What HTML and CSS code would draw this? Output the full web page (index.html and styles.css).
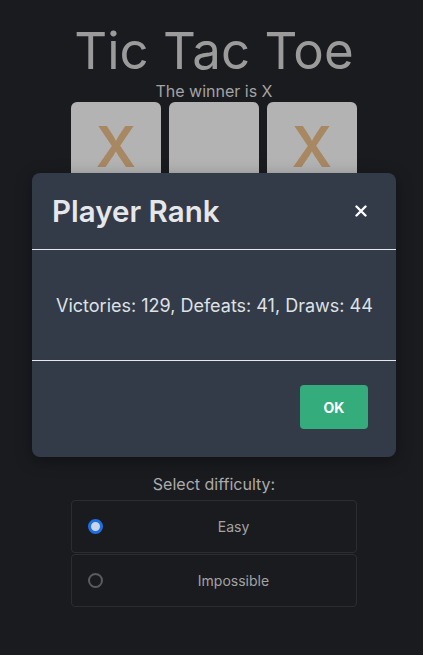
FILE: index.html
```html
<!DOCTYPE html>
<html>
<head>
<meta charset="utf-8">
<link rel="stylesheet" href="styles.css">
</head>
<body>
<main class="app">
  <h1 class="title">Tic Tac Toe</h1>
  <p class="status">The winner is X</p>
  <div class="board">
    <div class="cell">X</div>
    <div class="cell"></div>
    <div class="cell">X</div>
    <div class="cell"></div>
    <div class="cell"></div>
    <div class="cell"></div>
    <div class="cell"></div>
    <div class="cell"></div>
    <div class="cell"></div>
  </div>
  <p class="difficulty-label">Select difficulty:</p>
  <div class="options">
    <label class="option"><span class="radio checked"></span><span class="opt-text">Easy</span></label>
    <label class="option"><span class="radio"></span><span class="opt-text">Impossible</span></label>
  </div>
</main>
<div class="modal">
  <header class="modal-header">
    <h2 class="modal-title">Player Rank</h2>
    <button class="close" aria-label="Close">
      <svg width="12" height="12" viewBox="0 0 12 12"><path d="M1.5 1.5 L10.5 10.5 M10.5 1.5 L1.5 10.5" stroke="#fff" stroke-width="2.4" stroke-linecap="round"/></svg>
    </button>
  </header>
  <div class="modal-body">Victories: 129, Defeats: 41, Draws: 44</div>
  <footer class="modal-footer"><button class="ok">OK</button></footer>
</div>
</body>
</html>
```
FILE: styles.css
```css
* { box-sizing: border-box; }
html, body { margin: 0; padding: 0; }
body {
  background: #1a1b1f;
  font-family: Inter, "Noto Sans", sans-serif;
  width: 423px;
  height: 655px;
  overflow: hidden;
}
.app {
  display: flex;
  flex-direction: column;
  align-items: center;
  padding-top: 21px;
  padding-left: 5px;
}
.title {
  margin: 0;
  font-size: 51px;
  font-weight: 400;
  line-height: 60px;
  color: #9b9b9b;
}
.status {
  margin: 0;
  font-size: 16px;
  line-height: 20px;
  color: #a3a3a3;
}
.board {
  display: grid;
  grid-template-columns: repeat(3, 90px);
  grid-auto-rows: 90px;
  gap: 8px;
  margin-top: 1px;
}
.cell {
  background: #b3b3b3;
  border-radius: 6px;
  display: flex;
  align-items: center;
  justify-content: center;
  font-size: 56px;
  font-weight: 600;
  color: #a88863;
}
.difficulty-label {
  margin: 86px 0 6px;
  font-size: 16px;
  line-height: 20px;
  color: #ababab;
}
.options {
  display: flex;
  flex-direction: column;
  gap: 1px;
  width: 286px;
}
.option {
  display: flex;
  align-items: center;
  height: 53px;
  border: 1px solid #2b2d33;
  border-radius: 4px;
  padding-left: 16px;
}
.radio {
  width: 15px;
  height: 15px;
  border-radius: 50%;
  border: 2px solid #5a5b60;
  flex: none;
}
.radio.checked {
  border: 3px solid #1f6fe0;
  background: #c9d6ea;
}
.opt-text {
  flex: 1;
  text-align: center;
  font-size: 14px;
  color: #a3a3a3;
  padding-left: 8px;
}
.modal {
  position: absolute;
  left: 32px;
  top: 173px;
  width: 364px;
  height: 284px;
  background: #333a48;
  border-radius: 8px;
  display: flex;
  flex-direction: column;
  box-shadow: 0 4px 16px rgba(0,0,0,0.35);
}
.modal-header {
  height: 77px;
  flex: none;
  display: flex;
  align-items: center;
  justify-content: space-between;
  padding: 0 28px 0 20px;
  border-bottom: 1px solid #e8e8e8;
}
.modal-title {
  margin: 0;
  font-size: 29.5px;
  font-weight: 600;
  color: #e6e7ea;
}
.close {
  background: none;
  border: 0;
  padding: 0;
  display: flex;
  margin-right: 1px;
}
.modal-body {
  height: 111px;
  flex: none;
  border-bottom: 1px solid #e8e8e8;
  display: flex;
  align-items: center;
  padding-left: 24px;
  font-size: 18px;
  color: #dfe1e5;
}
.modal-footer {
  flex: 1;
  display: flex;
  justify-content: flex-end;
  align-items: flex-start;
  padding: 24px 28px 0 0;
}
.ok {
  width: 68px;
  height: 44px;
  border: 0;
  border-radius: 4px;
  background: #34ac7c;
  color: #ffffff;
  font-family: Inter, "Noto Sans", sans-serif;
  font-size: 14px;
  font-weight: 700;
}
```
